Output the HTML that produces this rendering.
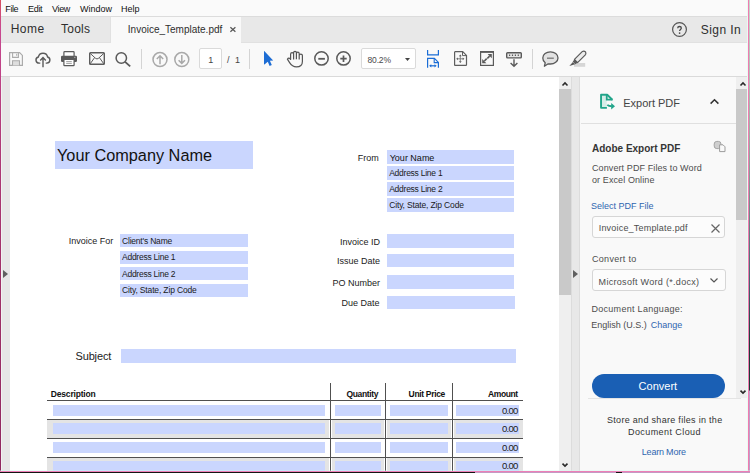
<!DOCTYPE html>
<html><head><meta charset="utf-8">
<style>
*{margin:0;padding:0;box-sizing:border-box}
html,body{width:750px;height:473px;overflow:hidden;background:#f9f9f9;font-family:"Liberation Sans",sans-serif;position:relative}
.a{position:absolute}
.t{position:absolute;line-height:1;white-space:nowrap}
svg{position:absolute;overflow:visible}
</style></head><body>
<div class="a" style="left:0px;top:0px;width:750px;height:16px;background:#fafafa;"></div>
<div class="t" style="left:5.3px;top:5px;font-size:9px;color:#111111;letter-spacing:-0.4px;">File</div>
<div class="t" style="left:28px;top:5px;font-size:9px;color:#111111;letter-spacing:-0.3px;">Edit</div>
<div class="t" style="left:52px;top:5px;font-size:9px;color:#111111;letter-spacing:-0.35px;">View</div>
<div class="t" style="left:80px;top:5px;font-size:9px;color:#111111;">Window</div>
<div class="t" style="left:121px;top:5px;font-size:9px;color:#111111;">Help</div>
<div class="a" style="left:0px;top:16px;width:750px;height:1px;background:#dcdcdc;"></div>
<div class="a" style="left:0px;top:17px;width:750px;height:26px;background:#e8e8e8;"></div>
<div class="a" style="left:0px;top:42px;width:111px;height:1px;background:#e1e1e1;"></div>
<div class="a" style="left:241px;top:42px;width:509px;height:1px;background:#e1e1e1;"></div>
<div class="a" style="left:110px;top:17px;width:1px;height:26px;background:#e1e1e1;"></div>
<div class="a" style="left:111px;top:17px;width:130px;height:26px;background:#f9f9f9;"></div>
<div class="t" style="left:10.7px;top:23px;font-size:12px;color:#2e2e2e;letter-spacing:0.5px;">Home</div>
<div class="t" style="left:61px;top:23px;font-size:12px;color:#2e2e2e;letter-spacing:0.25px;">Tools</div>
<div class="t" style="left:127.80000000000001px;top:25px;font-size:10px;color:#2e2e2e;">Invoice_Template.pdf</div>
<svg style="left:229.5px;top:27px" width="6" height="5" viewBox="0 0 6 5"><path d="M0.4 0.3L5.4 4.8M5.4 0.3L0.4 4.8" stroke="#555" stroke-width="1.2"/></svg>
<svg style="left:672px;top:22px" width="15" height="15" viewBox="0 0 15 15"><circle cx="7.5" cy="7.5" r="6.9" fill="none" stroke="#555" stroke-width="1.2"/><path d="M5.7 6.3C5.7 5.1 6.5 4.5 7.5 4.5S9.3 5.1 9.3 6.1C9.3 7.4 7.6 7.5 7.6 9.1" fill="none" stroke="#4a4a4a" stroke-width="1.3"/><circle cx="7.6" cy="11.1" r="0.85" fill="#4a4a4a"/></svg>
<div class="t" style="left:700.7px;top:24px;font-size:12px;color:#2e2e2e;letter-spacing:0.45px;">Sign In</div>
<div class="a" style="left:0px;top:76px;width:750px;height:1px;background:#dadada;"></div>
<svg style="left:9px;top:52px" width="14" height="14" viewBox="0 0 14 14"><path d="M0.6 0.6H10.6L13.4 3.4V13.4H0.6Z" fill="none" stroke="#ababab" stroke-width="1.2"/><path d="M3.6 0.6V5.4H9.4V0.6" fill="none" stroke="#ababab" stroke-width="1.1"/><rect x="7.2" y="1.8" width="1" height="2" fill="#ababab"/><path d="M3.5 13.4V8.8H10.5V13.4" fill="#dedede" stroke="#ababab" stroke-width="1.1"/></svg>
<svg style="left:35px;top:50.5px" width="16" height="17" viewBox="0 0 16 17"><path d="M5.3 12.1H4.1A3.1 3.1 0 0 1 3.39 5.98A4.7 4.7 0 0 1 12.61 6.01A3.1 3.1 0 0 1 11.8 12.1H10.7" fill="none" stroke="#5a5a5a" stroke-width="1.4"/><path d="M8 16.3V6.8M5.2 9.5L8 6.6L10.8 9.5" fill="none" stroke="#5a5a5a" stroke-width="1.4"/></svg>
<svg style="left:61px;top:51px" width="16" height="15" viewBox="0 0 16 15"><rect x="2.9" y="0.6" width="10.2" height="5" rx="0.8" fill="#fff" stroke="#5a5a5a" stroke-width="1.2"/><rect x="0" y="4.7" width="16" height="6.3" rx="1.2" fill="#5a5a5a"/><rect x="2.9" y="8.5" width="10.2" height="6.2" rx="0.6" fill="#fff" stroke="#5a5a5a" stroke-width="1.2"/><path d="M5.2 10.6H10.8M5.2 12.4H10.8" stroke="#888" stroke-width="0.8"/><rect x="13.2" y="5.8" width="1.2" height="1.2" fill="#aaa"/></svg>
<svg style="left:88.5px;top:52px" width="16" height="13" viewBox="0 0 16 13"><rect x="0.7" y="0.7" width="14.6" height="11.6" rx="0.8" fill="none" stroke="#5c5c5c" stroke-width="1.4"/><path d="M1.2 1.4L6.5 6.3Q8 7.6 9.5 6.3L14.8 1.4M5.6 5.6L1.2 11.8M10.4 5.6L14.8 11.8" fill="none" stroke="#5c5c5c" stroke-width="1"/></svg>
<svg style="left:115px;top:52px" width="16" height="15" viewBox="0 0 16 15"><circle cx="6.3" cy="6" r="5.2" fill="none" stroke="#5a5a5a" stroke-width="1.5"/><path d="M10.1 9.8L15.2 14.4" stroke="#5a5a5a" stroke-width="1.8"/></svg>
<div class="a" style="left:141px;top:49px;width:1px;height:20px;background:#d4d4d4;"></div>
<svg style="left:152px;top:51.5px" width="16" height="16" viewBox="0 0 16 16"><circle cx="8" cy="7.6" r="7" fill="none" stroke="#a9a9a9" stroke-width="1.5"/><path d="M8 12.2V3.8M4.8 7L8 3.8L11.2 7" fill="none" stroke="#a9a9a9" stroke-width="1.5"/></svg>
<svg style="left:174px;top:51.5px" width="16" height="16" viewBox="0 0 16 16"><circle cx="7.8" cy="7.6" r="7" fill="none" stroke="#a9a9a9" stroke-width="1.5"/><path d="M7.8 3V11.4M4.6 8.2L7.8 11.4L11 8.2" fill="none" stroke="#a9a9a9" stroke-width="1.5"/></svg>
<div class="a" style="left:199px;top:48px;width:23px;height:21px;background:#ffffff;border:1px solid #dadada;border-radius:2px"></div>
<div class="t" style="left:208.2px;top:56px;font-size:9px;color:#444;">1</div>
<div class="t" style="left:227px;top:56px;font-size:9px;color:#444;">/</div>
<div class="t" style="left:235px;top:56px;font-size:9px;color:#444;">1</div>
<div class="a" style="left:249px;top:49px;width:1px;height:20px;background:#d4d4d4;"></div>
<svg style="left:264px;top:51px" width="10" height="16" viewBox="0 0 10 16"><path d="M0 0.3Q0 -0.2 0.5 0.3L9.2 9.4L5.9 9.8L7.8 14.1L5.6 15L3.8 10.7L0.4 13.5Q0 13.8 0 13.2Z" fill="#1e6dd4"/></svg>
<svg style="left:284px;top:48px" width="22" height="22" viewBox="0 0 22 22"><path d="M3.4 11.2C4.2 9.7 5.8 9.8 6.6 11.4V6.2C6.6 4.1 9.6 4.1 9.6 6.2V5.1C9.6 2.9 12.4 2.9 12.4 5.1V5.7C12.4 3.7 15.2 3.7 15.2 5.7V7.5C15.2 5.6 18.4 5.6 18.4 7.5V13.4C18.4 16.8 16 18.8 12.4 18.8C9 18.8 7.4 17.4 5.6 14.6Z M9.6 6.2V11.4M12.4 5.1V11.2M15.2 5.7V11.4" fill="none" stroke="#555" stroke-width="1.2" stroke-linejoin="round"/></svg>
<svg style="left:314px;top:51px" width="15" height="15" viewBox="0 0 15 15"><circle cx="7.5" cy="7.4" r="6.7" fill="none" stroke="#5a5a5a" stroke-width="1.5"/><path d="M4.3 7.8H10.9" stroke="#5a5a5a" stroke-width="1.8"/></svg>
<svg style="left:335.5px;top:51px" width="15" height="15" viewBox="0 0 15 15"><circle cx="7.5" cy="7.4" r="6.7" fill="none" stroke="#5a5a5a" stroke-width="1.5"/><path d="M4.3 7.6H10.7M7.5 4.6V11" stroke="#5a5a5a" stroke-width="1.7"/></svg>
<div class="a" style="left:361px;top:48px;width:55px;height:21px;background:#ffffff;border:1px solid #dadada;border-radius:2px"></div>
<div class="t" style="left:367.5px;top:56px;font-size:8.5px;color:#4a4a4a;letter-spacing:-0.15px;">80.2%</div>
<svg style="left:404.5px;top:58px" width="5" height="3" viewBox="0 0 5 3"><path d="M0 0H5L2.5 3Z" fill="#444"/></svg>
<svg style="left:427px;top:50px" width="12" height="18" viewBox="0 0 12 18"><path d="M0.6 0V4.8H11.4V0" fill="none" stroke="#1a6dd6" stroke-width="1.2"/><path d="M0.6 17.7V8.4H7.4L11.4 12.4V17.7" fill="none" stroke="#1a6dd6" stroke-width="1.2"/><path d="M7.2 8.4V12.6H11.4" fill="none" stroke="#1a6dd6" stroke-width="1.1"/><path d="M3.8 15.8H8" fill="none" stroke="#1a6dd6" stroke-width="1.2"/><path d="M2.1 15.8L4.3 14.2V17.4ZM9.7 15.8L7.5 14.2V17.4Z" fill="#1a6dd6"/></svg>
<svg style="left:453.5px;top:51px" width="14" height="15" viewBox="0 0 14 15"><path d="M1.2 0.6H8.7L12.5 4.4V13.7Q12.5 14.4 11.8 14.4H1.3Q0.6 14.4 0.6 13.7V1.3Q0.6 0.6 1.2 0.6Z" fill="none" stroke="#5e5e5e" stroke-width="1.2"/><path d="M8.5 0.8V4.6H12.3" fill="none" stroke="#5e5e5e" stroke-width="1"/><path d="M6.3 5V10.6M3.6 7.8H9" fill="none" stroke="#777" stroke-width="0.9"/><path d="M6.3 3.6L7.7 5.3H4.9ZM6.3 12L7.7 10.3H4.9ZM2.2 7.8L3.9 6.4V9.2ZM10.4 7.8L8.7 6.4V9.2Z" fill="#5e5e5e"/></svg>
<svg style="left:480px;top:51px" width="14" height="15" viewBox="0 0 14 15"><rect x="0.6" y="0.8" width="12.8" height="13.6" fill="none" stroke="#5a5a5a" stroke-width="1.2"/><rect x="0" y="0" width="14" height="1.8" fill="#5a5a5a"/><path d="M11.8 3V7.2L7.6 3Z M2.2 12.2V8L6.4 12.2Z" fill="#5a5a5a"/><path d="M9.6 5.2L7.3 7.5M4.4 10L6.7 7.7" stroke="#5a5a5a" stroke-width="1.7"/></svg>
<svg style="left:506px;top:52px" width="16" height="15" viewBox="0 0 16 15"><rect x="0.7" y="0.7" width="14.6" height="5.2" rx="0.8" fill="#e6e6e6" stroke="#5a5a5a" stroke-width="1.4"/><path d="M3.6 2.6V4M6.5 2.6V4M9.4 2.6V4M12.3 2.6V4" stroke="#5a5a5a" stroke-width="1.2"/><path d="M8 7.2V14.3M4.6 11L8 14.3L11.4 11" fill="none" stroke="#5a5a5a" stroke-width="1.4"/></svg>
<div class="a" style="left:532px;top:49px;width:1px;height:20px;background:#d4d4d4;"></div>
<svg style="left:542px;top:51px" width="17" height="16" viewBox="0 0 17 16"><path d="M8.4 0.8C12.5 0.8 16 3.3 16 6.9C16 10.4 12.5 13 8.4 13C7.6 13 6.9 12.9 6.2 12.8L2.4 15.2L3.2 11.8C1.6 10.6 0.8 8.9 0.8 6.9C0.8 3.3 4.3 0.8 8.4 0.8Z" fill="#e2e2e2" stroke="#5a5a5a" stroke-width="1.3" stroke-linejoin="round"/><path d="M5 7.2H11.8" stroke="#777" stroke-width="1.3"/></svg>
<svg style="left:569px;top:51px" width="17" height="16" viewBox="0 0 17 16"><rect x="5" y="12" width="11.2" height="3.8" fill="#d6d6d6"/><path d="M5.44 8.44L13.44 0.44Q15 -0.6 16.56 0.9Q17.2 2.4 16.56 3.56L8.56 11.56Z" fill="#ececec" stroke="#5a5a5a" stroke-width="1.2" stroke-linejoin="round"/><path d="M5.44 8.44L8.56 11.56L6.6 13.3L3.7 10.4Z" fill="#5a5a5a"/><path d="M3.9 10.9L6.2 13.2L0.3 14.9Z" fill="#5a5a5a"/></svg>
<div class="a" style="left:1px;top:77px;width:9px;height:394px;background:#e6e6e6;"></div>
<div class="a" style="left:1px;top:77px;width:1px;height:394px;background:#f2f2f2;"></div>
<svg style="left:3px;top:270px" width="5" height="8" viewBox="0 0 5 8"><path d="M0 0L5 4L0 8Z" fill="#606060"/></svg>
<div class="a" style="left:10px;top:77px;width:549px;height:394px;background:#ffffff;"></div>
<div class="a" style="left:559px;top:77px;width:12px;height:394px;background:#efefef;"></div>
<div class="a" style="left:559px;top:89px;width:12px;height:206px;background:#c9c9c9;"></div>
<svg style="left:562px;top:81.5px" width="6" height="4" viewBox="0 0 6 4"><path d="M0.5 3.5L3 1L5.5 3.5" fill="none" stroke="#2a2a2a" stroke-width="1.6"/></svg>
<svg style="left:562px;top:463px" width="6" height="4" viewBox="0 0 6 4"><path d="M0.5 0.6L3 3.1L5.5 0.6" fill="none" stroke="#2a2a2a" stroke-width="1.6"/></svg>
<div class="a" style="left:571px;top:77px;width:1px;height:394px;background:#dcdcdc;"></div>
<div class="a" style="left:572px;top:77px;width:7px;height:394px;background:#e8e8e8;"></div>
<svg style="left:573px;top:270px" width="5" height="8" viewBox="0 0 5 8"><path d="M0 0L5 4L0 8Z" fill="#606060"/></svg>
<div class="a" style="left:579px;top:77px;width:1px;height:394px;background:#dcdcdc;"></div>
<div class="a" style="left:580px;top:77px;width:168px;height:394px;background:#f9f9f9;"></div>
<div class="a" style="left:581px;top:123px;width:155px;height:1px;background:#e0e0e0;"></div>
<div class="a" style="left:736px;top:77px;width:11px;height:321px;background:#efefef;"></div>
<div class="a" style="left:736px;top:89px;width:11px;height:131px;background:#c9c9c9;"></div>
<svg style="left:739.5px;top:81.5px" width="6" height="4" viewBox="0 0 6 4"><path d="M0.5 3.5L3 1L5.5 3.5" fill="none" stroke="#2a2a2a" stroke-width="1.6"/></svg>
<svg style="left:739.5px;top:390px" width="6" height="4" viewBox="0 0 6 4"><path d="M0.5 0.6L3 3.1L5.5 0.6" fill="none" stroke="#2a2a2a" stroke-width="1.6"/></svg>
<div class="a" style="left:588px;top:398px;width:153px;height:1px;background:#e4e4e4;"></div>
<svg style="left:598px;top:92px" width="20" height="20" viewBox="0 0 20 20"><path d="M4 3.6H8.7V15H4Z" fill="#d6ede8"/><path d="M8.9 15.85H3.05V2.75H9.2L14.3 7.8" fill="none" stroke="#22a58a" stroke-width="1.9" stroke-linejoin="round"/><path d="M8.75 2.75V7.7H14.7" fill="none" stroke="#22a58a" stroke-width="1.8"/><path d="M9.3 12.9C10.3 13.8 11.3 14.2 13.8 14.2" fill="none" stroke="#22a58a" stroke-width="1.9"/><path d="M13.2 11L17 14.2L13.2 17.4Z" fill="#22a58a"/></svg>
<div class="t" style="left:623.2px;top:98px;font-size:11px;color:#444;">Export PDF</div>
<svg style="left:710px;top:99px" width="9" height="5" viewBox="0 0 9 5"><path d="M0.6 4.6L4.5 0.8L8.4 4.6" fill="none" stroke="#333" stroke-width="1.5"/></svg>
<div class="t" style="left:592px;top:144px;font-size:10px;color:#353535;font-weight:700;">Adobe Export PDF</div>
<svg style="left:713px;top:140px" width="13" height="13" viewBox="0 0 13 13"><rect x="1.2" y="1.4" width="6.8" height="7.2" rx="2.6" fill="#cfcfcf" stroke="#a4a4a4" stroke-width="1"/><path d="M6.6 4.8H10L12 6.8V11.6H6.6Z" fill="#f9f9f9" stroke="#9c9c9c" stroke-width="1" stroke-linejoin="round"/></svg>
<div class="t" style="left:592px;top:164px;font-size:9px;color:#4d4d4d;letter-spacing:0.1px;">Convert PDF Files to Word</div>
<div class="t" style="left:592px;top:176px;font-size:9px;color:#4d4d4d;letter-spacing:0.1px;">or Excel Online</div>
<div class="t" style="left:591px;top:202px;font-size:9px;color:#2f66b0;">Select PDF File</div>
<div class="a" style="left:592px;top:216px;width:133px;height:22px;background:#fcfcfc;border:1px solid #d6d6d6;border-radius:3px"></div>
<div class="t" style="left:598.7px;top:224px;font-size:9px;color:#4d4d4d;letter-spacing:0.2px;">Invoice_Template.pdf</div>
<svg style="left:711px;top:223.5px" width="9" height="9" viewBox="0 0 9 9"><path d="M0.5 0.5L8.5 8.5M8.5 0.5L0.5 8.5" stroke="#666" stroke-width="1.2"/></svg>
<div class="t" style="left:592px;top:255px;font-size:9px;color:#4d4d4d;letter-spacing:0.3px;">Convert to</div>
<div class="a" style="left:592px;top:269px;width:134px;height:22px;background:#fcfcfc;border:1px solid #d6d6d6;border-radius:3px"></div>
<div class="t" style="left:598.6px;top:278px;font-size:9px;color:#4d4d4d;letter-spacing:0.3px;">Microsoft Word (*.docx)</div>
<svg style="left:710px;top:278px" width="8" height="5" viewBox="0 0 8 5"><path d="M0.5 0.5L4 4L7.5 0.5" fill="none" stroke="#555" stroke-width="1.2"/></svg>
<div class="t" style="left:591.4px;top:305px;font-size:9px;color:#4d4d4d;letter-spacing:0.3px;">Document Language:</div>
<div class="t" style="left:591.2px;top:321px;font-size:9px;color:#4d4d4d;">English (U.S.)</div>
<div class="t" style="left:650.8px;top:321px;font-size:9px;color:#2f66b0;">Change</div>
<div class="a" style="left:592px;top:374px;width:133px;height:23.6px;background:#1a5fb4;border-radius:12px"></div>
<div class="t" style="left:638.6px;top:381px;font-size:11px;color:#ffffff;">Convert</div>
<div class="t" style="left:607px;top:416px;font-size:9px;color:#333;letter-spacing:0.3px;">Store and share files in the</div>
<div class="t" style="left:628px;top:428px;font-size:9px;color:#333;letter-spacing:0.42px;">Document Cloud</div>
<div class="t" style="left:641.8px;top:448px;font-size:9px;color:#2f66b0;letter-spacing:-0.2px;">Learn More</div>
<div class="a" style="left:55px;top:141px;width:198px;height:28px;background:#cad6fe;"></div>
<div class="t" style="left:57px;top:147px;font-size:16.3px;color:#111;">Your Company Name</div>
<div class="t" style="left:357.8px;top:154px;font-size:9px;color:#222;">From</div>
<div class="a" style="left:387px;top:150px;width:127px;height:14px;background:#cad6fe;"></div>
<div class="a" style="left:387px;top:166px;width:127px;height:14px;background:#cad6fe;"></div>
<div class="a" style="left:387px;top:182px;width:127px;height:14px;background:#cad6fe;"></div>
<div class="a" style="left:387px;top:198px;width:127px;height:14px;background:#cad6fe;"></div>
<div class="t" style="left:389.7px;top:154px;font-size:9px;color:#111;">Your Name</div>
<div class="t" style="left:389.2px;top:169px;font-size:8.5px;color:#1a1a1a;letter-spacing:-0.25px;">Address Line 1</div>
<div class="t" style="left:389.2px;top:185px;font-size:8.5px;color:#1a1a1a;letter-spacing:-0.25px;">Address Line 2</div>
<div class="t" style="left:389.2px;top:201px;font-size:8.5px;color:#1a1a1a;letter-spacing:-0.15px;">City, State, Zip Code</div>
<div class="t" style="left:68.8px;top:237px;font-size:9px;color:#222;">Invoice For</div>
<div class="a" style="left:120px;top:234.0px;width:128px;height:13px;background:#cad6fe;"></div>
<div class="a" style="left:120px;top:250.5px;width:128px;height:13px;background:#cad6fe;"></div>
<div class="a" style="left:120px;top:267.0px;width:128px;height:13px;background:#cad6fe;"></div>
<div class="a" style="left:120px;top:283.5px;width:128px;height:13px;background:#cad6fe;"></div>
<div class="t" style="left:122px;top:237px;font-size:8.5px;color:#1a1a1a;letter-spacing:-0.2px;">Client's Name</div>
<div class="t" style="left:122px;top:253px;font-size:8.5px;color:#1a1a1a;letter-spacing:-0.25px;">Address Line 1</div>
<div class="t" style="left:122px;top:270px;font-size:8.5px;color:#1a1a1a;letter-spacing:-0.25px;">Address Line 2</div>
<div class="t" style="left:122px;top:286px;font-size:8.5px;color:#1a1a1a;letter-spacing:-0.15px;">City, State, Zip Code</div>
<div class="t" style="left:340px;top:238px;font-size:9px;color:#222;">Invoice ID</div>
<div class="t" style="left:337px;top:257px;font-size:9px;color:#222;">Issue Date</div>
<div class="t" style="left:332.5px;top:279px;font-size:9px;color:#222;">PO Number</div>
<div class="t" style="left:341.6px;top:299px;font-size:9px;color:#222;">Due Date</div>
<div class="a" style="left:387px;top:234px;width:127px;height:13.5px;background:#cad6fe;"></div>
<div class="a" style="left:387px;top:253.5px;width:127px;height:13.5px;background:#cad6fe;"></div>
<div class="a" style="left:387px;top:275px;width:127px;height:13.5px;background:#cad6fe;"></div>
<div class="a" style="left:387px;top:295.5px;width:128px;height:13px;background:#cad6fe;"></div>
<div class="t" style="left:75.5px;top:351px;font-size:11px;color:#222;letter-spacing:-0.15px;">Subject</div>
<div class="a" style="left:121px;top:348.5px;width:395px;height:14px;background:#cad6fe;"></div>
<div class="t" style="left:50.8px;top:390px;font-size:8.5px;color:#111;font-weight:700;letter-spacing:-0.18px;">Description</div>
<div class="t" style="left:346.5px;top:390px;font-size:8.5px;color:#111;font-weight:700;letter-spacing:-0.35px;">Quantity</div>
<div class="t" style="left:408.6px;top:390px;font-size:8.5px;color:#111;font-weight:700;letter-spacing:-0.33px;">Unit Price</div>
<div class="t" style="left:488px;top:390px;font-size:8.5px;color:#111;font-weight:700;letter-spacing:-0.4px;">Amount</div>
<div class="a" style="left:47px;top:420px;width:282px;height:18px;background:#e4e4e4;"></div>
<div class="a" style="left:332px;top:420px;width:52px;height:18px;background:#e4e4e4;"></div>
<div class="a" style="left:387px;top:420px;width:64px;height:18px;background:#e4e4e4;"></div>
<div class="a" style="left:454px;top:420px;width:69px;height:18px;background:#e4e4e4;"></div>
<div class="a" style="left:47px;top:458px;width:282px;height:13px;background:#e4e4e4;"></div>
<div class="a" style="left:332px;top:458px;width:52px;height:13px;background:#e4e4e4;"></div>
<div class="a" style="left:387px;top:458px;width:64px;height:13px;background:#e4e4e4;"></div>
<div class="a" style="left:454px;top:458px;width:69px;height:13px;background:#e4e4e4;"></div>
<div class="a" style="left:47px;top:400px;width:476px;height:1px;background:#505050;"></div>
<div class="a" style="left:47px;top:419px;width:476px;height:1px;background:#505050;"></div>
<div class="a" style="left:47px;top:438px;width:476px;height:1px;background:#505050;"></div>
<div class="a" style="left:47px;top:457px;width:476px;height:1px;background:#505050;"></div>
<div class="a" style="left:330px;top:383px;width:1px;height:88px;background:#505050;"></div>
<div class="a" style="left:385px;top:383px;width:1px;height:88px;background:#505050;"></div>
<div class="a" style="left:452px;top:383px;width:1px;height:88px;background:#505050;"></div>
<div class="a" style="left:53px;top:405px;width:272px;height:10.5px;background:#cad6fe;"></div>
<div class="a" style="left:335px;top:405px;width:46px;height:10.5px;background:#cad6fe;"></div>
<div class="a" style="left:390px;top:405px;width:58px;height:10.5px;background:#cad6fe;"></div>
<div class="a" style="left:456px;top:405px;width:63px;height:10.5px;background:#cad6fe;"></div>
<div class="t" style="left:502px;top:406px;font-size:9.5px;color:#1a1a1a;letter-spacing:-0.7px;">0.00</div>
<div class="a" style="left:53px;top:423px;width:272px;height:11px;background:#cad6fe;"></div>
<div class="a" style="left:335px;top:423px;width:46px;height:11px;background:#cad6fe;"></div>
<div class="a" style="left:390px;top:423px;width:58px;height:11px;background:#cad6fe;"></div>
<div class="a" style="left:456px;top:423px;width:63px;height:11px;background:#cad6fe;"></div>
<div class="t" style="left:502px;top:424px;font-size:9.5px;color:#1a1a1a;letter-spacing:-0.7px;">0.00</div>
<div class="a" style="left:53px;top:442px;width:272px;height:10.5px;background:#cad6fe;"></div>
<div class="a" style="left:335px;top:442px;width:46px;height:10.5px;background:#cad6fe;"></div>
<div class="a" style="left:390px;top:442px;width:58px;height:10.5px;background:#cad6fe;"></div>
<div class="a" style="left:456px;top:442px;width:63px;height:10.5px;background:#cad6fe;"></div>
<div class="t" style="left:502px;top:443px;font-size:9.5px;color:#1a1a1a;letter-spacing:-0.7px;">0.00</div>
<div class="a" style="left:53px;top:461px;width:272px;height:11px;background:#cad6fe;"></div>
<div class="a" style="left:335px;top:461px;width:46px;height:11px;background:#cad6fe;"></div>
<div class="a" style="left:390px;top:461px;width:58px;height:11px;background:#cad6fe;"></div>
<div class="a" style="left:456px;top:461px;width:63px;height:11px;background:#cad6fe;"></div>
<div class="t" style="left:502px;top:461px;font-size:9.5px;color:#1a1a1a;letter-spacing:-0.7px;">0.00</div>
<div class="a" style="left:0px;top:0px;width:1px;height:473px;background:linear-gradient(#d85060,#c84890 6%,#b03a78 30%,#a03068 60%,#902860);"></div>
<div class="a" style="left:747px;top:0px;width:1px;height:473px;background:#eafaf4;"></div>
<div class="a" style="left:748px;top:0px;width:1px;height:473px;background:#f07cb0;"></div>
<div class="a" style="left:749px;top:0px;width:1px;height:473px;background:linear-gradient(#c8d8d0 0px,#a0b0a8 135px,#486070 285px,#203838 345px,#203838 390px,#c0a0c8 391px);"></div>
<div class="a" style="left:0px;top:470px;width:750px;height:1px;background:rgba(200,255,240,0.35);"></div>
<div class="a" style="left:0px;top:471px;width:750px;height:1px;background:#ee7fb6;"></div>
<div class="a" style="left:0px;top:472px;width:475px;height:1px;background:#141414;"></div>
<div class="a" style="left:475px;top:472px;width:275px;height:1px;background:#c49ac4;"></div>
<div class="a" style="left:616px;top:472px;width:6px;height:1px;background:#141414;"></div>
</body></html>
